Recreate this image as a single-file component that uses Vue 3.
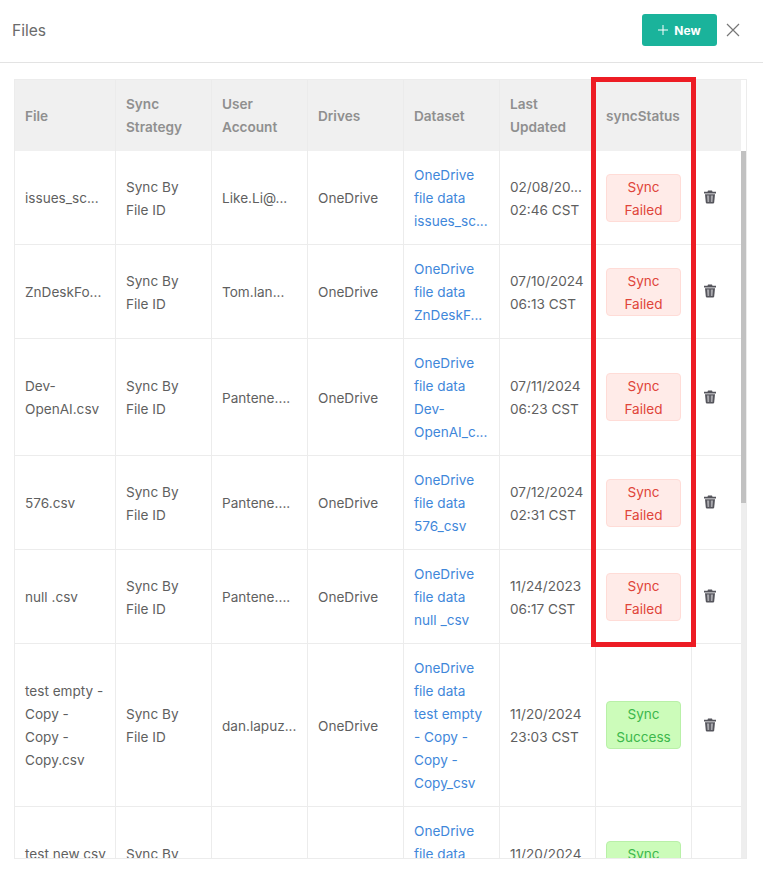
<script setup>
const columns = [
  { key: 'file', label: ['File'] },
  { key: 'strategy', label: ['Sync', 'Strategy'] },
  { key: 'user', label: ['User', 'Account'] },
  { key: 'drive', label: ['Drives'] },
  { key: 'dataset', label: ['Dataset'] },
  { key: 'updated', label: ['Last', 'Updated'] },
  { key: 'status', label: ['syncStatus'] },
  { key: 'action', label: [] }
]

const strategy = ['Sync By', 'File ID']
const failed = { ok: false, lines: ['Sync', 'Failed'] }
const success = { ok: true, lines: ['Sync', 'Success'] }

const rows = [
  { file: ['issues_sc...'], user: ['Like.Li@...'], dataset: ['OneDrive', 'file data', 'issues_sc...'], updated: ['02/08/20...', '02:46 CST'], status: failed },
  { file: ['ZnDeskFo...'], user: ['Tom.lan...'], dataset: ['OneDrive', 'file data', 'ZnDeskF...'], updated: ['07/10/2024', '06:13 CST'], status: failed },
  { file: ['Dev-', 'OpenAI.csv'], user: ['Pantene....'], dataset: ['OneDrive', 'file data', 'Dev-', 'OpenAI_c...'], updated: ['07/11/2024', '06:23 CST'], status: failed },
  { file: ['576.csv'], user: ['Pantene....'], dataset: ['OneDrive', 'file data', '576_csv'], updated: ['07/12/2024', '02:31 CST'], status: failed },
  { file: ['null .csv'], user: ['Pantene....'], dataset: ['OneDrive', 'file data', 'null _csv'], updated: ['11/24/2023', '06:17 CST'], status: failed },
  { file: ['test empty -', 'Copy -', 'Copy -', 'Copy.csv'], user: ['dan.lapuz...'], dataset: ['OneDrive', 'file data', 'test empty', '- Copy -', 'Copy -', 'Copy_csv'], updated: ['11/20/2024', '23:03 CST'], status: success },
  { file: ['test new csv', '\u00a0'], user: ['\u00a0'], dataset: ['OneDrive', 'file data', '\u00a0', '\u00a0'], updated: ['11/20/2024', '\u00a0'], status: success }
]
</script>

<template>
  <div class="page">
    <header class="topbar">
      <h1 class="title">Files</h1>
      <div class="actions">
        <button class="new-btn" type="button">
          <svg class="plus" viewBox="0 0 10 10" width="10" height="10" aria-hidden="true">
            <path d="M5 0V10M0 5H10" />
          </svg>
          <span>New</span>
        </button>
        <svg class="close" viewBox="0 0 14 14" width="14" height="14" aria-hidden="true">
          <path d="M1 1L13 13M13 1L1 13" />
        </svg>
      </div>
    </header>

    <main class="content">
      <div class="table-box">
        <div class="head-row">
          <div v-for="col in columns" :key="col.key" class="cell head-cell" :class="'col-' + col.key">
            <span v-for="line in col.label" :key="line" class="line">{{ line }}</span>
          </div>
        </div>

        <div class="body-area">
          <div class="rows">
            <div v-for="(row, i) in rows" :key="i" class="row">
              <div class="cell col-file"><span v-for="(l, n) in row.file" :key="n" class="line">{{ l }}</span></div>
              <div class="cell col-strategy"><span v-for="l in strategy" :key="l" class="line">{{ l }}</span></div>
              <div class="cell col-user"><span v-for="(l, n) in row.user" :key="n" class="line">{{ l }}</span></div>
              <div class="cell col-drive"><span class="line">OneDrive</span></div>
              <div class="cell col-dataset link"><span v-for="(l, n) in row.dataset" :key="n" class="line">{{ l }}</span></div>
              <div class="cell col-updated"><span v-for="(l, n) in row.updated" :key="n" class="line">{{ l }}</span></div>
              <div class="cell col-status">
                <div class="badge" :class="row.status.ok ? 'badge-ok' : 'badge-fail'">
                  <span v-for="l in row.status.lines" :key="l" class="line">{{ l }}</span>
                </div>
              </div>
              <div class="cell col-action">
                <svg class="trash" viewBox="0 0 14 14" width="14" height="14" aria-hidden="true">
                  <path class="trash-fill" d="M5 0.4H9L9.5 1.8H13V3.4H1V1.8H4.5Z" />
                  <path class="trash-fill" d="M2 4.2H12L11.2 12.6Q11.1 13.6 10 13.6H4Q2.9 13.6 2.8 12.6Z" />
                  <path class="trash-slot" d="M4 5.4H6.2V12H4.5ZM7.8 5.4H10L9.5 12H7.8Z" />
                </svg>
              </div>
            </div>
          </div>
          <div class="track"><div class="thumb"></div></div>
        </div>
      </div>
    </main>

    <div class="highlight"></div>
  </div>
</template>

<style>
html, body {
  margin: 0;
  background: #fff;
}
</style>

<style scoped>
.page {
  position: relative;
  width: 763px;
  height: 878px;
  overflow: hidden;
  display: flex;
  flex-direction: column;
  background: #fff;
  font-family: Inter, "Liberation Sans", sans-serif;
  font-size: 13.6px;
  line-height: 23px;
  color: #5f5f5f;
}
.topbar {
  box-sizing: border-box;
  height: 63px;
  flex: none;
  border-bottom: 1px solid #e3e3e3;
  display: flex;
  align-items: center;
  justify-content: space-between;
  padding: 0 23px 2px 12px;
}
.title {
  margin: 0;
  font-size: 15.6px;
  font-weight: 400;
  color: #6b6b6b;
}
.actions {
  display: flex;
  align-items: center;
  gap: 9px;
}
.new-btn {
  width: 75px;
  height: 32px;
  border: 0;
  border-radius: 3px;
  background: #1ab39b;
  color: #fff;
  font-family: inherit;
  font-size: 12px;
  font-weight: 700;
  display: flex;
  align-items: center;
  justify-content: center;
  gap: 6px;
  padding: 0;
}
.plus path {
  stroke: #fff;
  stroke-width: 1;
  fill: none;
}
.close path {
  stroke: #777;
  stroke-width: 1.2;
  fill: none;
}
.content {
  flex: 1;
  min-height: 0;
  padding: 16px 16px 19px 14px;
  display: flex;
}
.table-box {
  flex: 1;
  min-width: 0;
  border: 1px solid #ececec;
  display: flex;
  flex-direction: column;
  overflow: hidden;
}
.head-row {
  flex: none;
  display: flex;
  width: 726px;
  height: 71px;
  background: #f0f0f0;
  font-weight: 600;
  color: #8f8f8f;
}
.body-area {
  flex: 1;
  min-height: 0;
  display: flex;
}
.rows {
  width: 726px;
  flex: none;
  overflow: hidden;
}
.row {
  display: flex;
  border-bottom: 1px solid #ececec;
}
.cell {
  box-sizing: border-box;
  flex: none;
  padding: 12px 10px;
  border-right: 1px solid #ececec;
  display: flex;
  flex-direction: column;
  justify-content: center;
  white-space: nowrap;
}
.head-cell {
  border-right-color: #ebebeb;
  padding-top: 13px;
}
.line {
  display: block;
}
.row .line {
  padding-top: 1px;
  margin-bottom: -1px;
}
.col-file { width: 101px; }
.col-strategy,
.col-user,
.col-drive,
.col-dataset,
.col-updated,
.col-status { width: 96px; }
.col-action {
  width: 49px;
  border-right: 0;
  padding-left: 10.5px;
}
.link {
  color: #3f87da;
}
.badge {
  box-sizing: border-box;
  width: 75px;
  border: 1px solid;
  border-radius: 4px;
  text-align: center;
  padding: 0;
}
.badge-fail {
  background: #ffebe8;
  border-color: #ffdcd7;
  color: #e0453a;
}
.badge-ok {
  background: #ccfcba;
  border-color: #b9f0a8;
  color: #3db84c;
}
.trash {
  margin-top: -1px;
}
.trash-fill {
  fill: #55555c;
}
.trash-slot {
  fill: #a9a9ae;
}
.track {
  flex: none;
  width: 5px;
  background: #eeeeee;
}
.thumb {
  width: 100%;
  height: 352px;
  background: #c1c1c1;
}
.highlight {
  position: absolute;
  left: 591px;
  top: 77px;
  width: 105px;
  height: 570px;
  box-sizing: border-box;
  border: 5px solid #ed1c24;
  pointer-events: none;
}
</style>
